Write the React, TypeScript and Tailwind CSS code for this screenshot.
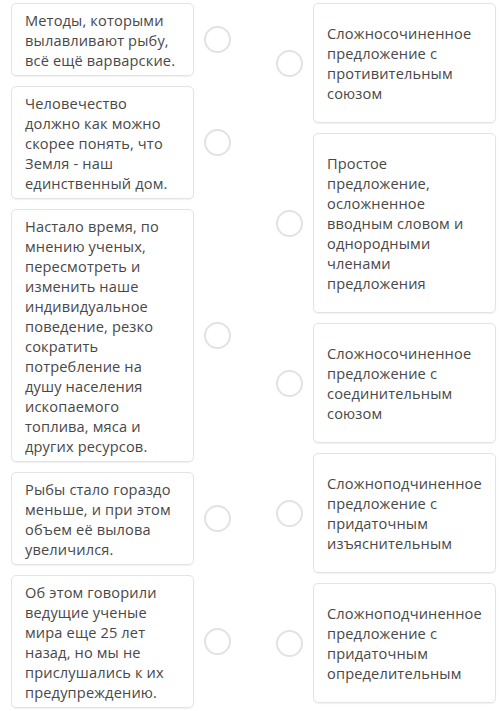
import React from 'react';

// Matching task: statements on the left, sentence types on the right

const left = [
  'Методы, которыми вылавливают рыбу, всё ещё варварские.',
  'Человечество должно как можно скорее понять, что Земля - наш единственный дом.',
  'Настало время, по мнению ученых, пересмотреть и изменить наше индивидуальное поведение, резко сократить потребление на душу населения ископаемого топлива, мяса и других ресурсов.',
  'Рыбы стало гораздо меньше, и при этом объем её вылова увеличился.',
  'Об этом говорили ведущие ученые мира еще 25 лет назад, но мы не прислушались к их предупреждению.',
];

const right = [
  'Сложносочиненное предложение с противительным союзом',
  'Простое предложение, осложненное вводным словом и однородными членами предложения',
  'Сложносочиненное предложение с соединительным союзом',
  'Сложноподчиненное предложение с придаточным изъяснительным',
  'Сложноподчиненное предложение с придаточным определительным',
];

function Dot() {
  return <div className="w-[27px] h-[27px] shrink-0 rounded-full border-2 border-[#e2e2e2] bg-white" />;
}

export default function App() {
  return (
    <div
      className="w-[500px] h-[711px] bg-white overflow-hidden flex gap-[45px] pl-[11px] pt-[3px] text-[14.6px] leading-[20px] text-[#484848] tracking-[0.15px]"
      style={{ fontFamily: '"Open Sans", sans-serif' }}
    >
      <div className="w-[220px] flex flex-col gap-[10px]">
        {left.map((t) => (
          <div key={t} className="flex items-center gap-[10px]">
            <div className="w-[183px] shrink-0 rounded-[5px] border border-[#e3e3e3] shadow-[0_1px_1px_rgba(0,0,0,0.06)] pl-[13px] pr-[13px] py-[5.5px]">
              {t}
            </div>
            <Dot />
          </div>
        ))}
      </div>
      <div className="w-[220px] flex flex-col gap-[10px]">
        {right.map((t) => (
          <div key={t} className="flex items-center gap-[10px]">
            <Dot />
            <div className="w-[183px] shrink-0 rounded-[5px] border border-[#e3e3e3] shadow-[0_1px_1px_rgba(0,0,0,0.06)] pl-[13px] pr-[13px] py-[19px]">
              {t}
            </div>
          </div>
        ))}
      </div>
    </div>
  );
}
